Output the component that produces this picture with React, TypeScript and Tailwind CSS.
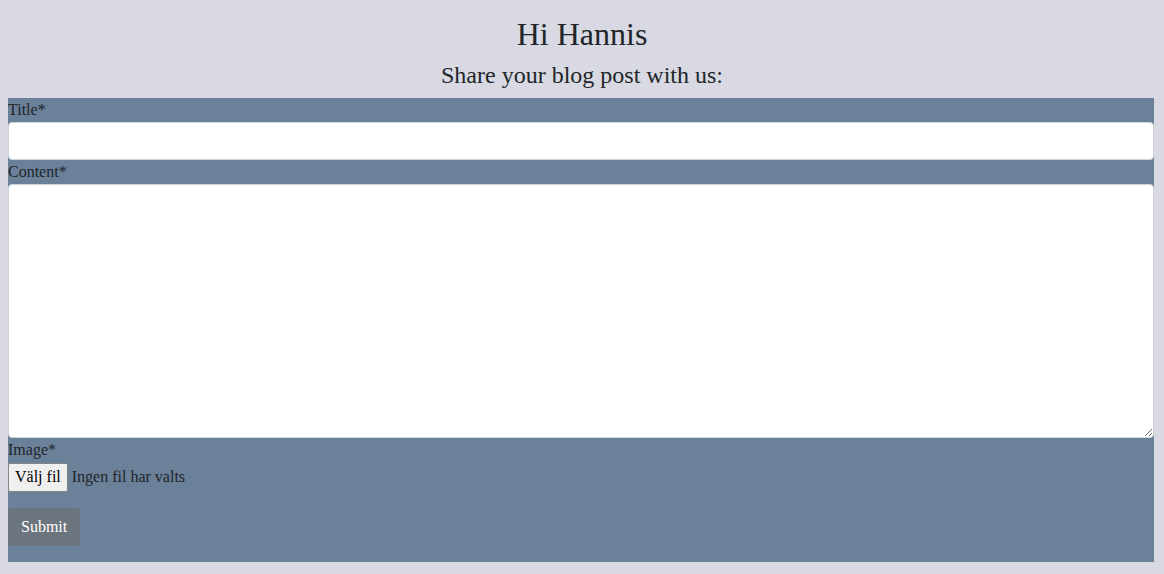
export default function App() {
  return (
    <div
      className="min-h-[574px] bg-[#d8d9e2] px-2 pt-[15px] text-[#212529]"
      style={{ fontFamily: '"Liberation Serif", "Times New Roman", serif' }}
    >
      <h1 className="mb-2 text-center text-[32px] leading-[1.2]">Hi Hannis</h1>
      <h2 className="mb-2 text-center text-[24px] leading-[1.2]">
        Share your blog post with us:
      </h2>
      <BlogForm />
    </div>
  );
}

function BlogForm() {
  return (
    <form
      className="flex w-[1146px] flex-col bg-[#6b8099] pb-4 text-base leading-6"
      onSubmit={(e) => e.preventDefault()}
    >
      <label htmlFor="title">Title*</label>
      <input
        id="title"
        type="text"
        className="h-[38px] w-full rounded-[4px] border border-[#ced4da] bg-white px-3 outline-none"
      />
      <label htmlFor="content">Content*</label>
      <textarea
        id="content"
        className="block h-[254px] w-full rounded-[4px] border border-[#ced4da] bg-white px-3 py-1.5 outline-none"
      />
      <label>Image*</label>
      <div className="flex h-[30px] items-center">
        <button
          type="button"
          className="flex h-[29px] items-center rounded-[2px] border border-[#858585] bg-[#efefef] px-[6px] text-black"
        >
          Välj fil
        </button>
        <span className="ml-[4px]">Ingen fil har valts</span>
      </div>
      <div className="mt-4">
        <button
          type="submit"
          className="h-[38px] rounded-[4px] border border-[#6c757d] bg-[#6c757d] px-3 text-white"
        >
          Submit
        </button>
      </div>
    </form>
  );
}
